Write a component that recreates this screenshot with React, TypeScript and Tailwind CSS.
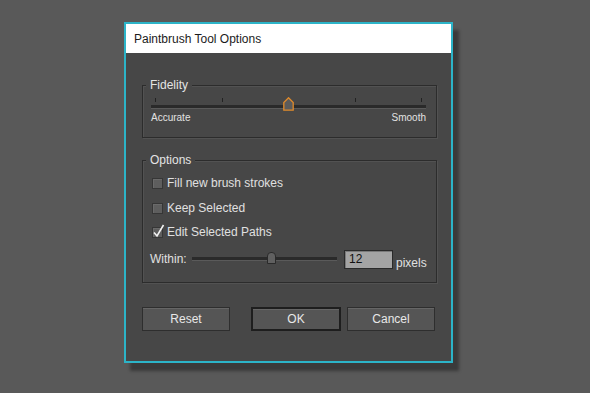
import type { ReactNode } from "react";

const FONT = { fontFamily: '"Liberation Sans", Arial, sans-serif' };

function GroupBox({ label, className, children }: { label: string; className?: string; children: ReactNode }) {
  return (
    <div className={`relative w-[295px] border border-[#2c2c2c] shadow-[inset_1px_1px_0_#525252,1px_1px_0_#525252] ${className ?? ""}`}>
      <span className="absolute -top-[8px] left-[3px] bg-[#474747] px-[4px] text-[12px] leading-[14px] text-[#e4e4e4]">
        {label}
      </span>
      {children}
    </div>
  );
}

function Checkbox({ label, checked }: { label: string; checked?: boolean }) {
  return (
    <div className="ml-[2px] flex h-[20px] items-center gap-[4px]">
      <span className="relative block h-[11px] w-[11px] border border-[#363636] bg-[#5e5e5e] shadow-[inset_1px_1px_0_#6a6a6a]">
        {checked ? (
          <svg className="absolute -left-[1px] -top-[4px]" width="13" height="14" viewBox="0 0 13 14">
            <path d="M2 8.5 L5 12 L11.5 1" fill="none" stroke="#f2f2f2" strokeWidth="1.6" />
          </svg>
        ) : null}
      </span>
      <span className="text-[12px] text-[#e0e0e0]">{label}</span>
    </div>
  );
}

function Button({ label, primary }: { label: string; primary?: boolean }) {
  return (
    <button
      type="button"
      className={`h-[24px] bg-[#555555] text-[12px] text-[#e8e8e8] shadow-[inset_0_1px_0_#666666] ${
        primary ? "w-[90px] border-2 border-[#1e1e1e]" : "w-[88px] border border-[#2e2e2e]"
      }`}
    >
      {label}
    </button>
  );
}

export default function App() {
  const ticks = [0, 1, 2, 3, 4];
  return (
    <div className="h-[393px] w-[590px] bg-[#595959] pl-[124px] pt-[22px]" style={FONT}>
      <div className="w-[329px] border-2 border-[#2cb4c8] bg-[#474747] shadow-[6px_8px_3px_rgba(0,0,0,0.35)]">
        <div className="flex h-[29px] items-center bg-white pl-[8px] text-[12px] text-[#1b1b1b]">
          Paintbrush Tool Options
        </div>

        <div className="px-[16px] pb-[30px] pt-[32px]">
          <GroupBox label="Fidelity">
            <div className="pb-[13px] pl-[8px] pr-[10px] pt-[11px]">
              <div className="relative h-[14px]">
                <div className="flex justify-between px-[4px] pt-[1px]">
                  {ticks.map((t) => (
                    <span key={t} className="block h-[4px] w-px bg-[#222222]" />
                  ))}
                </div>
                <div className="absolute left-0 right-0 top-[8px] h-[3px] bg-[#2a2a2a] shadow-[0_1px_0_#5a5a5a]" />
                <svg className="absolute left-[132px] top-0" width="11" height="14" viewBox="0 0 11 14">
                  <path d="M5.5 0.8 L10.2 5.5 L10.2 13.2 L0.8 13.2 L0.8 5.5 Z" fill="#5b5b5b" stroke="#e08a2a" strokeWidth="1.3" />
                </svg>
              </div>
              <div className="mt-[1px] flex justify-between text-[10px] leading-[12px] text-[#e2e2e2]">
                <span>Accurate</span>
                <span>Smooth</span>
              </div>
            </div>
          </GroupBox>

          <GroupBox label="Options" className="mt-[22px]">
            <div className="pb-[13px] pl-[7px] pt-[12px]">
              <Checkbox label="Fill new brush strokes" />
              <div className="mt-[5px]">
                <Checkbox label="Keep Selected" />
              </div>
              <div className="mt-[4px]">
                <Checkbox label="Edit Selected Paths" checked />
              </div>
              <div className="mt-[7px] flex h-[20px] items-center">
                <span className="w-[42px] text-[12px] text-[#e0e0e0]">Within:</span>
                <div className="relative h-[14px] w-[145px]">
                  <div className="absolute left-0 right-0 top-[5px] h-[3px] bg-[#2a2a2a] shadow-[0_1px_0_#5a5a5a]" />
                  <span className="absolute left-[75px] top-0 block h-[12px] w-[9px] rounded-t-[4px] border border-[#2a2a2a] bg-[#606060]" />
                </div>
                <div className="ml-[7px] flex h-[19px] w-[49px] items-center border border-[#2a2a2a] bg-[#a4a4a4] pl-[4px] text-[12px] text-[#111111] shadow-[inset_1px_1px_0_#7a7a7a]">
                  12
                </div>
                <span className="ml-[3px] mt-[8px] text-[12px] text-[#e0e0e0]">pixels</span>
              </div>
            </div>
          </GroupBox>

          <div className="mt-[23px] flex items-center">
            <Button label="Reset" />
            <div className="ml-[21px]">
              <Button label="OK" primary />
            </div>
            <div className="ml-[6px]">
              <Button label="Cancel" />
            </div>
          </div>
        </div>
      </div>
    </div>
  );
}
